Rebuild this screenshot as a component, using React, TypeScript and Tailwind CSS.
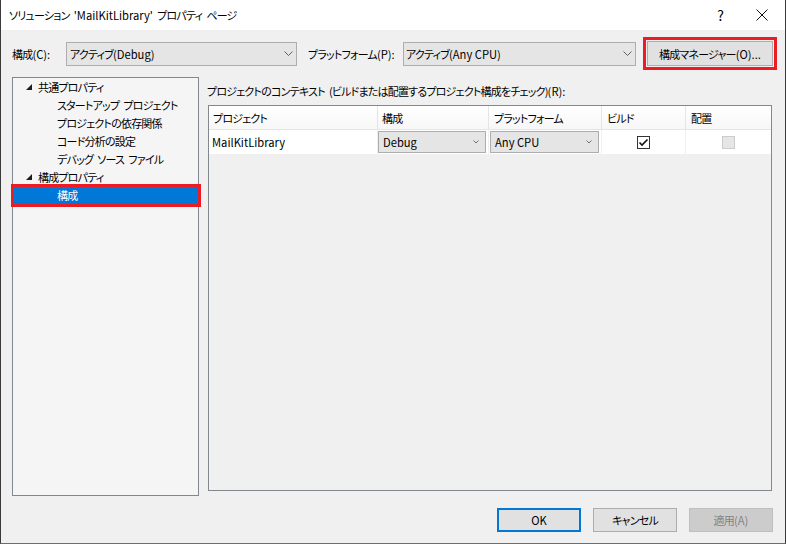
import React from "react";

const Chevron = () => (
  <svg width="9" height="5" viewBox="0 0 9 5">
    <polyline points="0.5,0.5 4.5,4.5 8.5,0.5" fill="none" stroke="#606060" strokeWidth="1" />
  </svg>
);

const SmallChevron = () => (
  <svg width="6" height="4" viewBox="0 0 6 4">
    <polyline points="0.5,0.5 3,3 5.5,0.5" fill="none" stroke="#707070" strokeWidth="1" />
  </svg>
);

const Tri = () => (
  <svg width="6" height="6" viewBox="0 0 6 6">
    <polygon points="6,0 6,6 0,6" fill="#1e1e1e" />
  </svg>
);

function TreeRow({ indent, text, expander, selected }: { indent: boolean; text: string; expander?: boolean; selected?: boolean }) {
  return (
    <div className={"relative flex h-[18px] items-center whitespace-nowrap " + (selected ? "bg-[#0078d7] text-white" : "")}>
      <div className="flex w-[25px] shrink-0 items-center justify-end pr-[6px]">{expander ? <Tri /> : null}</div>
      <span className={indent ? "pl-[19px]" : ""}>{text}</span>
      {selected ? (
        <div className="absolute left-[-2px] right-[-3px] top-[-2px] bottom-[-3px] border-[3px] border-[#ed1c24]" />
      ) : null}
    </div>
  );
}

const lat = "text-[11.2px] tracking-normal [word-spacing:normal]";

export default function App() {
  return (
    <div className="flex h-[544px] w-[786px] flex-col overflow-hidden border-x border-b border-x-[#3a3a3a] border-b-[#6e6e6e] bg-[#f0f0f0] font-['Noto_Sans_CJK_JP',sans-serif] text-[11px] leading-[16px] tracking-[-0.8px] text-black [font-feature-settings:'palt'] [word-spacing:2.5px]">
      {/* title bar */}
      <div className="flex h-[30px] shrink-0 items-center bg-white pl-[8px]">
        <span className="flex-1 whitespace-nowrap">
          ソリューション <span className={lat}>'MailKitLibrary'</span> プロパティ ページ
        </span>
        <span className="mr-[33px] text-[14px]">?</span>
        <div className="mr-[17px]">
          <svg width="12" height="12" viewBox="0 0 12 12">
            <path d="M0.5 0.5 L11.5 11.5 M11.5 0.5 L0.5 11.5" stroke="#111" strokeWidth="1" />
          </svg>
        </div>
      </div>

      {/* top row */}
      <div className="mt-[7px] flex h-[33px] shrink-0 items-center whitespace-nowrap pl-[11px]">
        <span className="w-[54px]">
          構成<span className={lat}>(C):</span>
        </span>
        <div className="flex h-[24px] w-[231px] items-center justify-between border border-[#adadad] bg-[#e5e5e5] pl-[3px] pr-[3px]">
          <span>
            アクティブ<span className={lat}>(Debug)</span>
          </span>
          <Chevron />
        </div>
        <span className="ml-[11px] w-[95px]">
          プラットフォーム<span className={lat}>(P):</span>
        </span>
        <div className="flex h-[24px] w-[233px] items-center justify-between border border-[#adadad] bg-[#e5e5e5] pl-[2px] pr-[3px]">
          <span>
            アクティブ<span className={lat}>(Any CPU)</span>
          </span>
          <Chevron />
        </div>
        <div className="ml-[7px] flex h-[33px] w-[134px] border-[3px] border-[#ed1c24] p-[1px]">
          <div className="flex flex-1 items-center justify-center border border-[#adadad] bg-[#e1e1e1]">
            構成マネージャー<span className={lat}>(O)...</span>
          </div>
        </div>
      </div>

      {/* main */}
      <div className="mt-[7px] flex h-[419px] shrink-0 pl-[11px]">
        <div className="w-[187px] shrink-0 border border-[#828790] bg-[#f5f5f5]">
          <TreeRow indent={false} expander text="共通プロパティ" />
          <TreeRow indent text="スタートアップ プロジェクト" />
          <TreeRow indent text="プロジェクトの依存関係" />
          <TreeRow indent text="コード分析の設定" />
          <TreeRow indent text="デバッグ ソース ファイル" />
          <TreeRow indent={false} expander text="構成プロパティ" />
          <TreeRow indent selected text="構成" />
        </div>
        <div className="ml-[9px] flex w-[564px] flex-col">
          <div className="flex h-[28px] items-center whitespace-nowrap">
            <span className="ml-[-1px]">
              プロジェクトのコンテキスト (ビルドまたは配置するプロジェクト構成をチェック)<span className={lat}>(R):</span>
            </span>
          </div>
          <div className="h-[386px] border border-[#828790] bg-[#f0f0f0]">
            {/* header */}
            <div className="flex h-[24px] border-b border-[#e5e5e5] bg-gradient-to-b from-white to-[#f7f7f7] whitespace-nowrap">
              <div className="flex w-[169px] items-center border-r border-[#e5e5e5] pl-[4px]">プロジェクト</div>
              <div className="flex w-[111px] items-center border-r border-[#e5e5e5] pl-[4px]">構成</div>
              <div className="flex w-[113px] items-center border-r border-[#e5e5e5] pl-[5px]">プラットフォーム</div>
              <div className="flex w-[84px] items-center border-r border-[#e5e5e5] pl-[5px]">ビルド</div>
              <div className="flex flex-1 items-center pl-[5px]">配置</div>
            </div>
            {/* data row */}
            <div className="flex h-[24px] bg-white">
              <div className={"flex w-[169px] items-center border-r border-[#f0f0f0] pl-[3px] " + lat}>MailKitLibrary</div>
              <div className="flex w-[111px] items-center border-r border-[#f0f0f0] py-[1px] pr-[2px]">
                <div className={"flex h-full flex-1 items-center justify-between border border-[#adadad] bg-[#e5e5e5] pl-[4px] pr-[6px] " + lat}>
                  <span>Debug</span>
                  <SmallChevron />
                </div>
              </div>
              <div className="flex w-[113px] items-center border-r border-[#f0f0f0] py-[1px] pl-[1px] pr-[2px]">
                <div className={"flex h-full flex-1 items-center justify-between border border-[#adadad] bg-[#e5e5e5] pl-[4px] pr-[6px] " + lat}>
                  <span>Any CPU</span>
                  <SmallChevron />
                </div>
              </div>
              <div className="flex w-[84px] items-center justify-center border-r border-[#f0f0f0]">
                <svg width="13" height="13" viewBox="0 0 13 13">
                  <rect x="0.5" y="0.5" width="12" height="12" fill="#fff" stroke="#333" />
                  <path d="M2.5 6.5 L5 9 L10.5 3.5" fill="none" stroke="#111" strokeWidth="1.6" />
                </svg>
              </div>
              <div className="flex flex-1 items-center justify-center">
                <div className="h-[13px] w-[13px] border border-[#cccccc] bg-[#e6e6e6]" />
              </div>
            </div>
          </div>
        </div>
      </div>

      {/* bottom buttons */}
      <div className="mt-[12px] flex shrink-0 justify-end gap-[12px] pr-[12px]">
        <div className={"flex h-[24px] w-[84px] items-center justify-center border-2 border-[#0078d7] bg-[#e1e1e1] " + lat}>OK</div>
        <div className="flex h-[24px] w-[84px] items-center justify-center border border-[#adadad] bg-[#e1e1e1]">キャンセル</div>
        <div className="flex h-[24px] w-[84px] items-center justify-center border border-[#bfbfbf] bg-[#cccccc] text-[#838383]">
          適用<span className={lat}>(A)</span>
        </div>
      </div>
    </div>
  );
}
